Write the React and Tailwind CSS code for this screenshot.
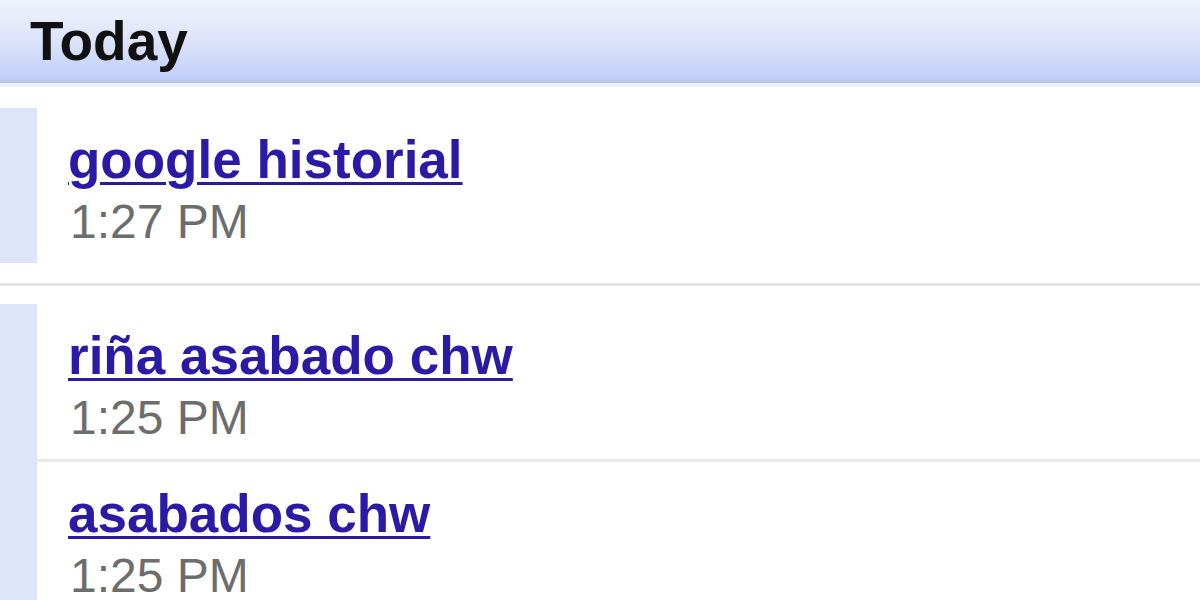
const entries = [
  { group: [{ title: 'google historial', time: '1:27 PM' }] },
  {
    group: [
      { title: 'riña asabado chw', time: '1:25 PM' },
      { title: 'asabados chw', time: '1:25 PM' },
    ],
  },
];

function Entry({ title, time, divider }) {
  return (
    <div className={`h-[155px] pl-[31px] pt-[22px] ${divider ? 'border-t-[3px] border-[#e9e9e9]' : ''}`}>
      <a href="#" className="block w-fit text-[53px] leading-[60px] font-bold text-[#2a1aa6] underline decoration-[3px] underline-offset-[4px]">
        {title}
      </a>
      <div className="mt-[2px] text-[48px] leading-[60px] text-[#6d6d6d] pl-[2px]">{time}</div>
    </div>
  );
}

export default function App() {
  return (
    <div className="w-[1200px] h-[600px] overflow-hidden bg-white font-['Liberation_Sans',Arial,sans-serif]">
      <div className="h-[83px] bg-gradient-to-b from-[#f1f3fb] via-[#dde4fa] to-[#bfcdf8] border-b-[3px] border-[#b9c5e6] pl-[30px] pt-[9px]">
        <h1 className="text-[55px] leading-[64px] font-bold text-[#111]">Today</h1>
      </div>
      <div className="h-[4px] bg-[#eef2fd]" />
      <div className="pt-[21px]">
        {entries.map((e, gi) => (
          <div key={gi} className={gi > 0 ? 'mt-[20px] border-t-[3px] border-[#e6e6e6] pt-[18px]' : ''}>
            <div className="flex">
              <div className="w-[37px] shrink-0 bg-[#dee5fa]" />
              <div className="flex-1">
                {e.group.map((it, i) => (
                  <Entry key={i} title={it.title} time={it.time} divider={i > 0} />
                ))}
              </div>
            </div>
          </div>
        ))}
      </div>
    </div>
  );
}
